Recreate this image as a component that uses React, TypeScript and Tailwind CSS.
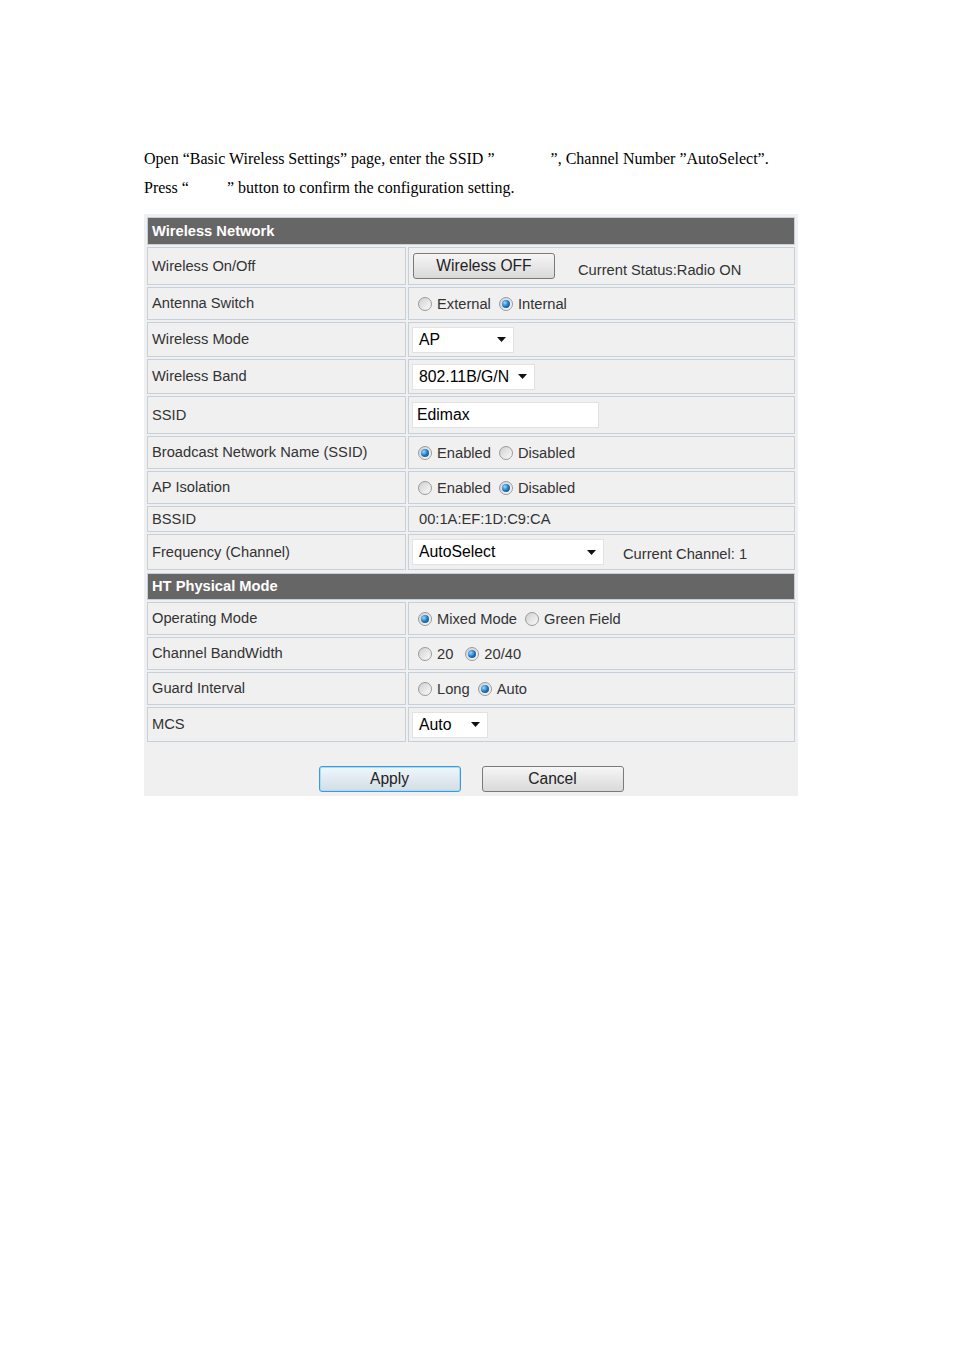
import React from 'react';

const Radio = ({ checked }: { checked?: boolean }) => (
    <span className="inline-flex items-center justify-center w-[14px] h-[14px] rounded-full border border-[#9a9a9a] bg-gradient-to-br from-[#d0d0d0] to-[#fbfbfb] shrink-0">
        {checked && (
            <span className="w-[8px] h-[8px] rounded-full bg-[radial-gradient(circle_at_35%_35%,#9fd8ff,#1a78c2_50%,#0b3f73)]" />
        )}
    </span>
);

const RadioGroup = ({ options }: { options: { label: string; checked?: boolean; gap?: string }[] }) => (
    <div className="flex items-center pl-[9px] pt-[2px] text-[14.7px] text-[#333]">
        {options.map((o, i) => (
            <label key={o.label} className={`flex items-center gap-[5px] ${i > 0 ? o.gap ?? 'ml-[8px]' : ''}`}>
                <Radio checked={o.checked} />
                <span>{o.label}</span>
            </label>
        ))}
    </div>
);

const Select = ({ value, width }: { value: string; width: string }) => (
    <div className={`ml-[3px] h-[26px] ${width} bg-white border border-[#e2e2e2] flex items-center justify-between pl-[6px] pr-[7px] text-[15.8px] text-black`}>
        <span>{value}</span>
        <svg width="9" height="5" viewBox="0 0 9 5"><path d="M0 0h9L4.5 5z" fill="#111" /></svg>
    </div>
);

const SectionHeader = ({ title, h }: { title: string; h: string }) => (
    <div className={`${h} bg-[#666666] border border-[#c6d0da] flex items-center pl-[4px] text-white font-bold text-[14.7px]`}>
        {title}
    </div>
);

const Row = ({ label, h, children }: { label: string; h: string; children?: React.ReactNode }) => (
    <div className={`flex gap-[2px] ${h}`}>
        <div className="w-[259px] border border-[#c6d0da] flex items-center pl-[4px] text-[14.7px] text-[#333]">{label}</div>
        <div className="w-[387px] border border-[#c6d0da] flex items-center">{children}</div>
    </div>
);

export default function App() {
    return (
        <div className="min-h-[1350px] bg-white pt-[144px] pl-[144px]" style={{ fontFamily: '"Liberation Sans", Arial, sans-serif' }}>
            <div className="text-[16px] leading-[29px] text-black" style={{ fontFamily: '"Liberation Serif", "Times New Roman", serif' }}>
                <p>Open “Basic Wireless Settings” page, enter the SSID ”<span className="inline-block w-[56px]" />”, Channel Number ”AutoSelect”.</p>
                <p>Press “<span className="inline-block w-[38px]" />” button to confirm the configuration setting.</p>
            </div>

            <div className="mt-[12px] w-[654px] bg-[#f0f0f0] p-[3px] flex flex-col gap-[2px]">
                <SectionHeader title="Wireless Network" h="h-[28px]" />
                <Row label="Wireless On/Off" h="h-[38px]">
                    <button className="ml-[4px] w-[142px] h-[26px] rounded-[3px] border border-[#7a7a7a] bg-gradient-to-b from-[#f6f6f6] to-[#d9d9d9] text-[15.6px] text-[#222]">
                        Wireless OFF
                    </button>
                    <span className="ml-[23px] mt-[8px] text-[14.7px] text-[#333]">Current Status:Radio ON</span>
                </Row>
                <Row label="Antenna Switch" h="h-[33px]">
                    <RadioGroup options={[{ label: 'External' }, { label: 'Internal', checked: true, gap: 'ml-[8px]' }]} />
                </Row>
                <Row label="Wireless Mode" h="h-[35px]">
                    <Select value="AP" width="w-[102px]" />
                </Row>
                <Row label="Wireless Band" h="h-[35px]">
                    <Select value="802.11B/G/N" width="w-[123px]" />
                </Row>
                <Row label="SSID" h="h-[38px]">
                    <div className="ml-[3px] h-[26px] w-[187px] bg-white border border-[#e2e2e2] flex items-center pl-[4px] text-[15.8px] text-black">
                        Edimax
                    </div>
                </Row>
                <Row label="Broadcast Network Name (SSID)" h="h-[33px]">
                    <RadioGroup options={[{ label: 'Enabled', checked: true }, { label: 'Disabled' }]} />
                </Row>
                <Row label="AP Isolation" h="h-[33px]">
                    <RadioGroup options={[{ label: 'Enabled' }, { label: 'Disabled', checked: true }]} />
                </Row>
                <Row label="BSSID" h="h-[26px]">
                    <span className="pl-[10px] text-[14.7px] text-[#333]">00:1A:EF:1D:C9:CA</span>
                </Row>
                <Row label="Frequency (Channel)" h="h-[36px]">
                    <Select value="AutoSelect" width="w-[192px]" />
                    <span className="ml-[19px] mt-[4px] text-[14.7px] text-[#333]">Current Channel: 1</span>
                </Row>
                <div className="mt-[1px]">
                    <SectionHeader title="HT Physical Mode" h="h-[27px]" />
                </div>
                <Row label="Operating Mode" h="h-[33px]">
                    <RadioGroup options={[{ label: 'Mixed Mode', checked: true }, { label: 'Green Field' }]} />
                </Row>
                <Row label="Channel BandWidth" h="h-[33px]">
                    <RadioGroup options={[{ label: '20' }, { label: '20/40', checked: true, gap: 'ml-[12px]' }]} />
                </Row>
                <Row label="Guard Interval" h="h-[33px]">
                    <RadioGroup options={[{ label: 'Long' }, { label: 'Auto', checked: true }]} />
                </Row>
                <Row label="MCS" h="h-[35px]">
                    <Select value="Auto" width="w-[76px]" />
                </Row>

                <div className="flex justify-center gap-[21px] pt-[22px] pb-[1px]">
                    <button className="w-[142px] h-[26px] rounded-[3px] border border-[#3c9bd6] shadow-[0_0_0_1px_#a9dcf7_inset] bg-gradient-to-b from-[#eef7fc] to-[#d3dde4] text-[15.6px] text-[#222]">
                        Apply
                    </button>
                    <button className="w-[142px] h-[26px] rounded-[3px] border border-[#7a7a7a] bg-gradient-to-b from-[#f6f6f6] to-[#d9d9d9] text-[15.6px] text-[#222]">
                        Cancel
                    </button>
                </div>
            </div>
        </div>
    );
}
